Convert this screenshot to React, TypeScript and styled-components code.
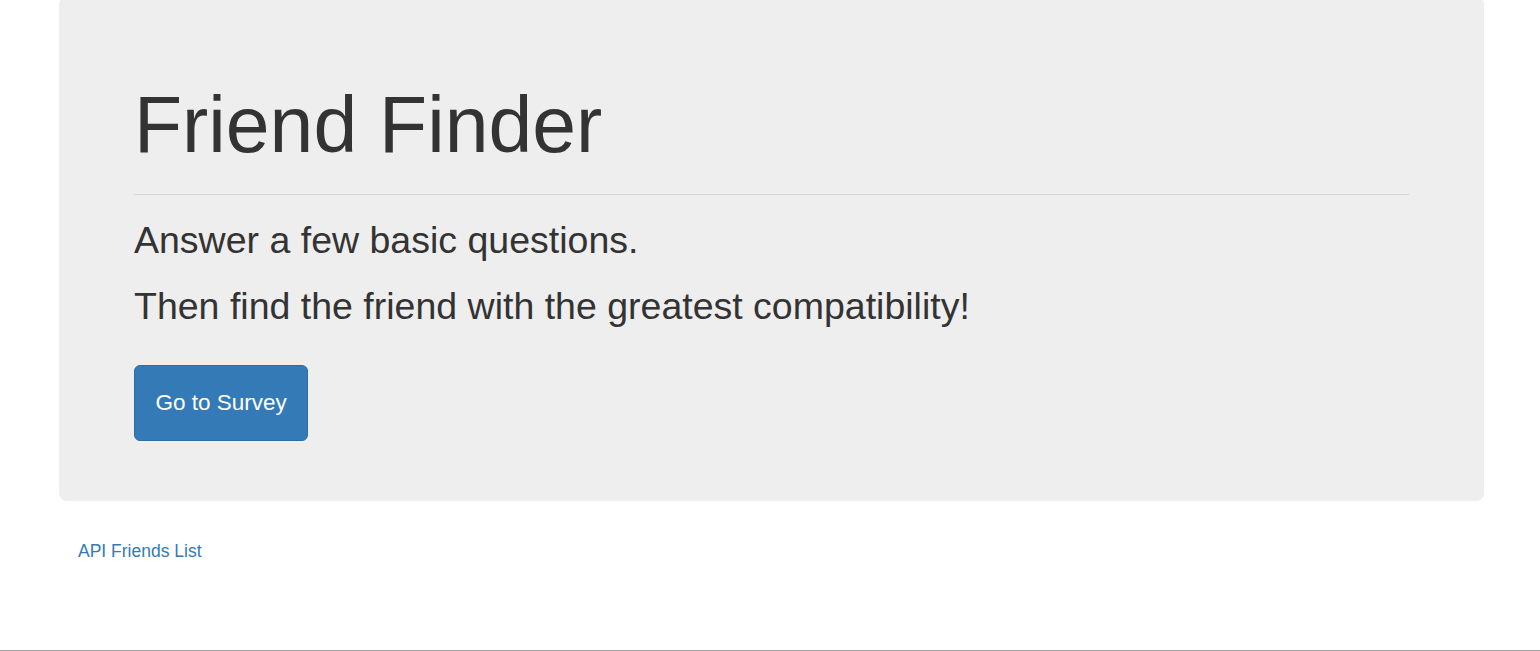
import styled, { createGlobalStyle } from "styled-components";

const GlobalStyle = createGlobalStyle`
  * {
    box-sizing: border-box;
  }

  html,
  body {
    margin: 0;
    padding: 0;
    background: #fff;
  }

  body {
    font-family: "Liberation Sans", Arial, Helvetica, sans-serif;
    color: #333;
    font-size: 17.5px;
    line-height: 1.42857;
  }
`;

const Page = styled.div`
  min-height: 100vh;
  display: flex;
  flex-direction: column;
`;

const Container = styled.div`
  padding: 0 56px 0 59px;
`;

const Jumbotron = styled.section`
  margin-top: -3px;
  margin-bottom: 38.5px;
  padding: 60px 75px;
  background: #eee;
  border-radius: 7.5px;
`;

const Title = styled.h1`
  margin: 25px 0 0;
  font-size: 78.75px;
  font-weight: 400;
  line-height: 1.1;
  color: #333;
`;

const Divider = styled.hr`
  margin: 25px 0;
  border: 0;
  border-top: 1px solid #d6d6d6;
`;

const Lead = styled.h2`
  margin: 25px 0 12.5px;
  font-size: 37.5px;
  font-weight: 400;
  line-height: 1.1;
  color: #333;
`;

const ButtonRow = styled.div`
  display: flex;
  margin-top: 38px;
`;

const PrimaryButton = styled.a`
  display: inline-block;
  padding: 21.75px 20.5px;
  font-size: 22.5px;
  line-height: 30px;
  color: #fff;
  text-decoration: none;
  background: #337ab7;
  border: 1px solid #2e6da4;
  border-radius: 6px;
  cursor: pointer;

  &:hover {
    background: #286090;
  }
`;

const LinkList = styled.div`
  padding-left: 19px;
`;

const TextLink = styled.a`
  color: #337ab7;
  text-decoration: none;
  font-size: 17.5px;
  line-height: 25px;

  &:hover {
    text-decoration: underline;
  }
`;

const Footer = styled.footer`
  margin-top: auto;
  border-top: 1px solid #a0a0a0;
`;

export default function App() {
  return (
    <>
      <GlobalStyle />
      <Page>
        <Container>
          <Jumbotron>
            <Title>Friend Finder</Title>
            <Divider />
            <Lead>Answer a few basic questions.</Lead>
            <Lead>Then find the friend with the greatest compatibility!</Lead>
            <ButtonRow>
              <PrimaryButton href="#survey">Go to Survey</PrimaryButton>
            </ButtonRow>
          </Jumbotron>
          <LinkList>
            <TextLink href="#api-friends">API Friends List</TextLink>
          </LinkList>
        </Container>
        <Footer />
      </Page>
    </>
  );
}
